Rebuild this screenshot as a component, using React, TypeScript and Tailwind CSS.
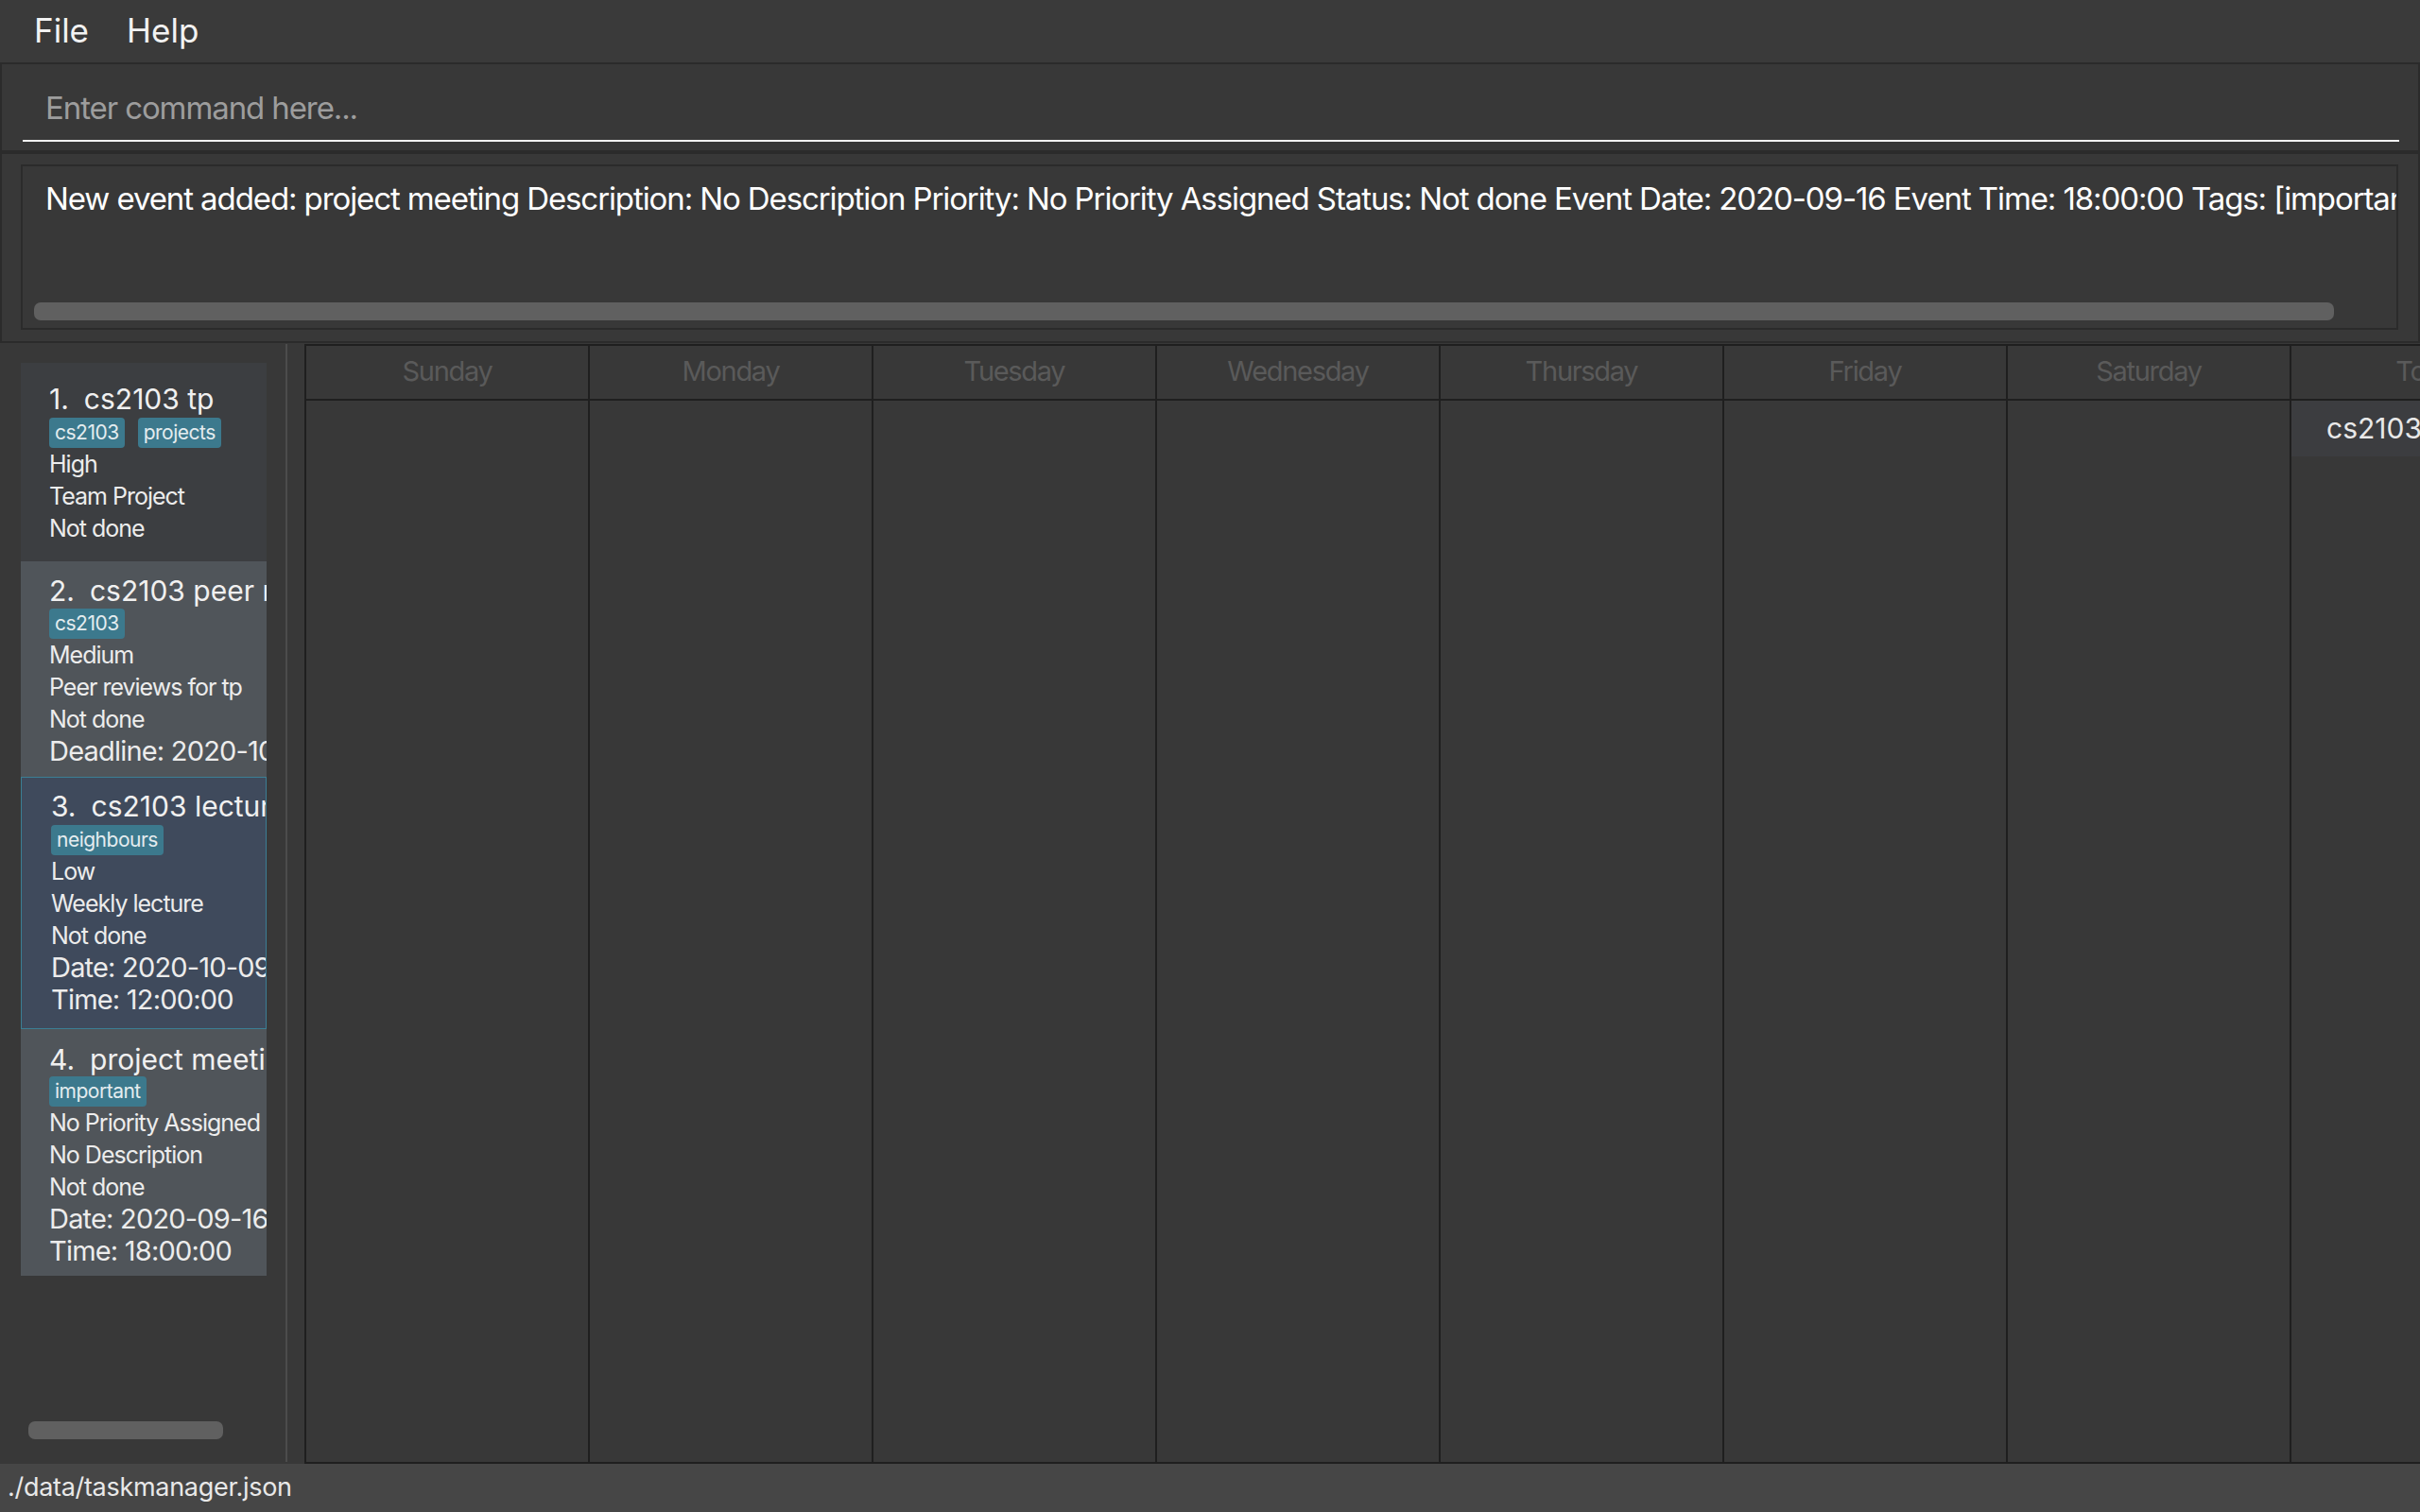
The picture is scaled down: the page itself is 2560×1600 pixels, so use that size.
import React from "react";

type Line = { text: string; big?: boolean };
type CardProps = {
  n: number;
  name: string;
  tags: string[];
  lines: Line[];
  bg: string;
  selected?: boolean;
  pt: number;
  pb: number;
  tagMt: number;
  pl: number;
};

function Card(p: CardProps) {
  return (
    <div
      className={
        "w-[260px] overflow-hidden whitespace-nowrap " +
        (p.selected ? "border border-[#3b7e94] " : "")
      }
      style={{ backgroundColor: p.bg, paddingTop: p.pt, paddingBottom: p.pb, paddingLeft: p.pl }}
    >
      <div className="flex gap-[16px] text-[30px] leading-[36px] text-[#f0f0f0]">
        <span>{p.n}.</span>
        <span>{p.name}</span>
      </div>
      <div className="flex gap-[14px]" style={{ marginTop: p.tagMt }}>
        {p.tags.map((t) => (
          <span
            key={t}
            className="h-[32px] rounded-[4px] bg-[#3c798d] px-[6px] text-[21px] leading-[32px] tracking-[-0.5px] text-[#e4ecef]"
          >
            {t}
          </span>
        ))}
      </div>
      {p.lines.map((l, i) =>
        l.big ? (
          <div key={i} className="text-[29px] leading-[34px] tracking-[-0.8px] text-[#ececec]">
            {l.text}
          </div>
        ) : (
          <div key={i} className="text-[25px] leading-[34px] tracking-[-1px] text-[#ececec]">
            {l.text}
          </div>
        )
      )}
    </div>
  );
}

const days = ["Sunday", "Monday", "Tuesday", "Wednesday", "Thursday", "Friday", "Saturday", "Today"];

export default function App() {
  return (
    <div
      className="w-[2560px] h-[1600px] bg-[#383838] flex flex-col overflow-hidden"
      style={{ fontFamily: "Inter, 'Noto Sans', sans-serif" }}
    >
      {/* Menu bar */}
      <div className="h-[68px] shrink-0 bg-[#3a3a3a] border-b-2 border-[#2b2b2b] flex items-center pl-[36px] gap-[40px] text-[35px] text-[#f2f2f2] pb-[2px]">
        <span>File</span>
        <span>Help</span>
      </div>

      {/* Command box */}
      <div className="h-[95px] shrink-0 border-x-2 border-b-4 border-[#2b2b2b] bg-[#383838] pl-[22px] pr-[20px]">
        <div className="h-[82px] border-b-2 border-[#f4f4f4] pl-[24px] flex items-end">
          <div className="text-[33px] leading-[40px] tracking-[-1.1px] text-[#9d9d9d] pb-[14px]">
            Enter command here...
          </div>
        </div>
      </div>

      {/* Result display */}
      <div className="h-[200px] shrink-0 border-x-2 border-b-2 border-[#2b2b2b] bg-[#383838] pt-[11px] pl-[20px] pr-[21px] pb-[12px]">
        <div className="h-full border-2 border-[#2b2b2b] flex flex-col overflow-hidden">
          <div className="pl-[24px] pt-[14px] text-[33px] leading-[40px] tracking-[-1.1px] text-white whitespace-nowrap overflow-hidden">
            New event added: project meeting Description: No Description Priority: No Priority Assigned Status: Not done Event Date: 2020-09-16 Event Time: 18:00:00 Tags: [important]
          </div>
          <div className="flex-1" />
          <div className="pl-[12px] pb-[8px]">
            <div className="w-[2433px] h-[19px] rounded-[7px] bg-[#606060]" />
          </div>
        </div>
      </div>

      {/* Main */}
      <div className="flex-1 flex min-h-0">
        {/* List pane */}
        <div className="w-[302px] shrink-0 flex flex-col pl-[22px] pt-[21px]">
          <div className="flex flex-col">
            <Card
              n={1}
              name="cs2103 tp"
              tags={["cs2103", "projects"]}
              lines={[{ text: "High" }, { text: "Team Project" }, { text: "Not done" }]}
              bg="#3c3e41"
              pt={20}
              pb={18}
              tagMt={2}
              pl={30}
            />
            <Card
              n={2}
              name="cs2103 peer reviews"
              tags={["cs2103"]}
              lines={[
                { text: "Medium" },
                { text: "Peer reviews for tp" },
                { text: "Not done" },
                { text: "Deadline: 2020-10-10", big: true },
              ]}
              bg="#50555a"
              pt={13}
              pb={10}
              tagMt={1}
              pl={30}
            />
            <Card
              n={3}
              name="cs2103 lecture"
              tags={["neighbours"]}
              lines={[
                { text: "Low" },
                { text: "Weekly lecture" },
                { text: "Not done" },
                { text: "Date: 2020-10-09", big: true },
                { text: "Time: 12:00:00", big: true },
              ]}
              bg="#3f4a5c"
              selected
              pt={12}
              pb={13}
              tagMt={2}
              pl={31}
            />
            <Card
              n={4}
              name="project meeting"
              tags={["important"]}
              lines={[
                { text: "No Priority Assigned" },
                { text: "No Description" },
                { text: "Not done" },
                { text: "Date: 2020-09-16", big: true },
                { text: "Time: 18:00:00", big: true },
              ]}
              bg="#50555a"
              pt={14}
              pb={9}
              tagMt={0}
              pl={30}
            />
          </div>
          <div className="flex-1" />
          <div className="pl-[8px] pb-[26px]">
            <div className="w-[206px] h-[19px] rounded-[7px] bg-[#606060]" />
          </div>
        </div>

        {/* Divider */}
        <div className="w-[2px] shrink-0 bg-[#4c4c4c] mt-[1px] mb-[2px]" />

        {/* Calendar */}
        <div className="flex-1 min-w-0 pl-[18px] pt-[1px] overflow-hidden">
          <div className="h-full flex border-t-2 border-b-2 border-[#1f1f1f] w-max">
            {days.map((d, i) => (
              <div key={d} className="w-[300px] shrink-0 border-l-2 border-[#1f1f1f] flex flex-col">
                <div className="h-[58px] border-b-2 border-[#1f1f1f] flex items-center justify-center text-[29px] tracking-[-1.3px] text-[#5a5a5a] pb-[2px]">
                  {d}
                </div>
                {i === 7 && (
                  <div className="h-[59px] bg-[#3c3d40] pl-[37px] pt-[11px] text-[30px] leading-[36px] text-[#e8e8e8] whitespace-nowrap">
                    cs2103 lecture
                  </div>
                )}
              </div>
            ))}
          </div>
        </div>
      </div>

      {/* Status bar */}
      <div className="h-[51px] shrink-0 bg-[#464646] flex items-center pl-[8px] text-[27px] tracking-[-0.3px] text-[#e8e8e8]">
        ./data/taskmanager.json
      </div>
    </div>
  );
}
